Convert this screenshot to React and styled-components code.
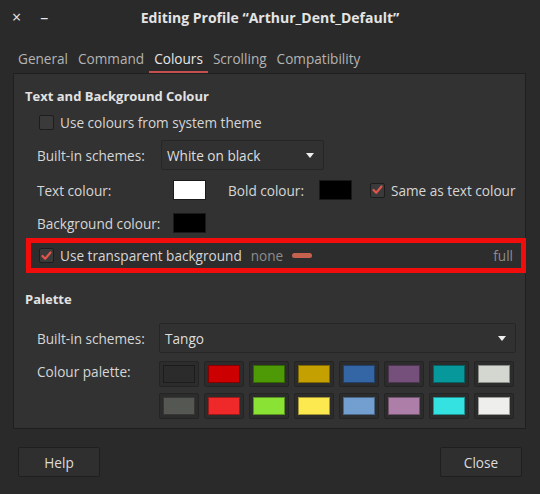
import styled, { createGlobalStyle } from 'styled-components';

const Global = createGlobalStyle`
  html, body {
    margin: 0;
    padding: 0;
    background: #2a2a2a;
  }
  body {
    font-family: "Open Sans", "Noto Sans", sans-serif;
    font-size: 13.6px;
    color: #d6d6d6;
  }
`;

const Window = styled.div`
  width: 540px;
  height: 494px;
  background: #2a2a2a;
  display: flex;
  flex-direction: column;
  overflow: hidden;
`;

const TitleBar = styled.div`
  height: 34px;
  display: grid;
  grid-template-columns: 1fr auto 1fr;
  align-items: center;
  padding: 0 12px;
`;

const WinButtons = styled.div`
  display: flex;
  align-items: center;
  gap: 19px;
  color: #e8e8e8;
  font-size: 16px;
`;

const Title = styled.div`
  font-weight: 700;
  font-size: 14px;
  color: #e4e4e4;
`;

const Notebook = styled.div`
  margin: 11px 14px 0 13px;
  display: flex;
  flex-direction: column;
`;

const TabStrip = styled.div`
  display: flex;
  height: 28px;
  align-items: stretch;
`;

const Tab = styled.div`
  padding: 0 5px;
  display: flex;
  align-items: center;
  color: ${(p) => (p.$active ? '#e6e6e6' : '#b4b4b4')};
  border-bottom: 2px solid ${(p) => (p.$active ? '#c5504d' : 'transparent')};
  box-sizing: border-box;
`;

const Panel = styled.div`
  background: #323232;
  border: 1px solid #1f1f1f;
  height: 356px;
  box-sizing: border-box;
  padding: 13px 0 0 11px;
  display: flex;
  flex-direction: column;
`;

const Heading = styled.div`
  font-weight: 700;
  font-size: 13px;
  color: #e2e2e2;
  height: 18px;
  line-height: 18px;
  margin-top: ${(p) => p.$mt || 0}px;
`;

const Indent = styled.div`
  padding-left: 12px;
  margin-top: ${(p) => p.$mt || 0}px;
  display: flex;
  flex-direction: column;
`;

const Row = styled.div`
  display: flex;
  align-items: ${(p) => (p.$top ? 'flex-start' : 'center')};
  height: ${(p) => p.$h || 32}px;
  margin-top: ${(p) => p.$mt || 0}px;
`;

const Label = styled.div`
  width: ${(p) => p.$w}px;
  padding-left: ${(p) => p.$pl || 0}px;
  line-height: ${(p) => p.$lh || 'normal'};
  box-sizing: border-box;
  flex: none;
  white-space: nowrap;
`;

const CheckBox = styled.span`
  width: 13px;
  height: 13px;
  flex: none;
  background: #3a3a3a;
  border: 1px solid #1d1d1d;
  border-radius: 2px;
  margin: 0 6px 0 ${(p) => p.$ml || 2}px;
  display: flex;
  align-items: center;
  justify-content: center;
`;

const Combo = styled.div`
  width: ${(p) => p.$w}px;
  height: 30px;
  box-sizing: border-box;
  border: 1px solid #262626;
  background: #313131;
  border-radius: 2px;
  display: flex;
  align-items: center;
  justify-content: space-between;
  padding: 0 9px 0 5px;
  color: #dedede;
`;

const Arrow = styled.span`
  width: 0;
  height: 0;
  border-left: 4px solid transparent;
  border-right: 4px solid transparent;
  border-top: 5px solid #eeeeee;
`;

const ColorButton = styled.div`
  width: 45px;
  height: 30px;
  box-sizing: border-box;
  padding: 5px 6px;
  flex: none;
  display: flex;
`;

const Swatch = styled.div`
  flex: 1;
  background: ${(p) => p.$c};
  border: 1px solid #1a1a1a;
`;

const Highlight = styled.div`
  margin: 1px 0 0 1px;
  width: 500px;
  height: 35px;
  box-sizing: border-box;
  border: 5px solid #f20c0c;
  background: #2d2d2d;
  display: flex;
  align-items: center;
  padding: 0 8px 0 6px;
`;

const Muted = styled.span`
  color: #8c8c8c;
  margin-left: ${(p) => p.$ml || 0}px;
`;

const SliderBar = styled.span`
  width: 20px;
  height: 5px;
  border-radius: 3px;
  background: #c7614f;
  margin-left: 9px;
`;

const Spacer = styled.div`
  flex: 1;
`;

const PaletteGrid = styled.div`
  display: grid;
  grid-template-columns: repeat(8, 40px);
  grid-auto-rows: 26px;
  column-gap: 5px;
  row-gap: 6px;
`;

const PaletteCell = styled.div`
  box-sizing: border-box;
  padding: 3px 3px;
  border: 1px solid #242424;
  border-radius: 2px;
  background: #2c2c2c;
  display: flex;
`;

const PaletteFill = styled.div`
  flex: 1;
  background: ${(p) => p.$c};
  border: 1px solid rgba(0, 0, 0, 0.35);
`;

const Footer = styled.div`
  display: flex;
  justify-content: space-between;
  padding: 18px 18px 0 18px;
`;

const Button = styled.div`
  width: 82px;
  height: 30px;
  box-sizing: border-box;
  border: 1px solid #1f1f1f;
  background: #2f2f2f;
  border-radius: 2px;
  display: flex;
  align-items: center;
  justify-content: center;
  color: #dcdcdc;
`;

function Check() {
  return (
    <svg width="11" height="10" viewBox="0 0 11 10">
      <path d="M1.5 5 L4.2 7.8 L9.5 1.5" fill="none" stroke="#e0564c" strokeWidth="2.2" strokeLinecap="round" strokeLinejoin="round" />
    </svg>
  );
}

const palette = [
  '#2b2b2b', '#cc0000', '#4e9a06', '#c4a000', '#3465a4', '#75507b', '#06989a', '#d3d7cf',
  '#555753', '#ef2929', '#8ae234', '#fce94f', '#729fcf', '#ad7fa8', '#34e2e2', '#eeeeec',
];

export default function App() {
  return (
    <Window>
      <Global />
      <TitleBar>
        <WinButtons>
          <span>×</span>
          <span>–</span>
        </WinButtons>
        <Title>Editing Profile “Arthur_Dent_Default”</Title>
        <div />
      </TitleBar>

      <Notebook>
        <TabStrip>
          <Tab>General</Tab>
          <Tab>Command</Tab>
          <Tab $active>Colours</Tab>
          <Tab>Scrolling</Tab>
          <Tab>Compatibility</Tab>
        </TabStrip>

        <Panel>
          <Heading>Text and Background Colour</Heading>
          <Indent>
            <Row $h={34}>
              <CheckBox />
              <span>Use colours from system theme</span>
            </Row>
            <Row $h={32}>
              <Label $w={124}>Built-in schemes:</Label>
              <Combo $w={163}>
                <span>White on black</span>
                <Arrow />
              </Combo>
            </Row>
            <Row $h={38}>
              <Label $w={130}>Text colour:</Label>
              <ColorButton><Swatch $c="#ffffff" /></ColorButton>
              <Label $w={101} $pl={16}>Bold colour:</Label>
              <ColorButton><Swatch $c="#000000" /></ColorButton>
              <CheckBox $ml={12}><Check /></CheckBox>
              <span>Same as text colour</span>
            </Row>
            <Row $h={28}>
              <Label $w={130}>Background colour:</Label>
              <ColorButton><Swatch $c="#000000" /></ColorButton>
            </Row>
          </Indent>

          <Highlight>
            <CheckBox><Check /></CheckBox>
            <span>Use transparent background</span>
            <Muted $ml={9}>none</Muted>
            <SliderBar />
            <Spacer />
            <Muted>full</Muted>
          </Highlight>

          <Heading $mt={17}>Palette</Heading>
          <Indent $mt={14}>
            <Row $h={32}>
              <Label $w={122}>Built-in schemes:</Label>
              <Combo $w={357}>
                <span>Tango</span>
                <Arrow />
              </Combo>
            </Row>
            <Row $h={58} $mt={7} $top>
              <Label $w={122} $lh="22px">Colour palette:</Label>
              <PaletteGrid>
                {palette.map((c, i) => (
                  <PaletteCell key={i}>
                    <PaletteFill $c={c} />
                  </PaletteCell>
                ))}
              </PaletteGrid>
            </Row>
          </Indent>
        </Panel>
      </Notebook>

      <Footer>
        <Button>Help</Button>
        <Button>Close</Button>
      </Footer>
    </Window>
  );
}
